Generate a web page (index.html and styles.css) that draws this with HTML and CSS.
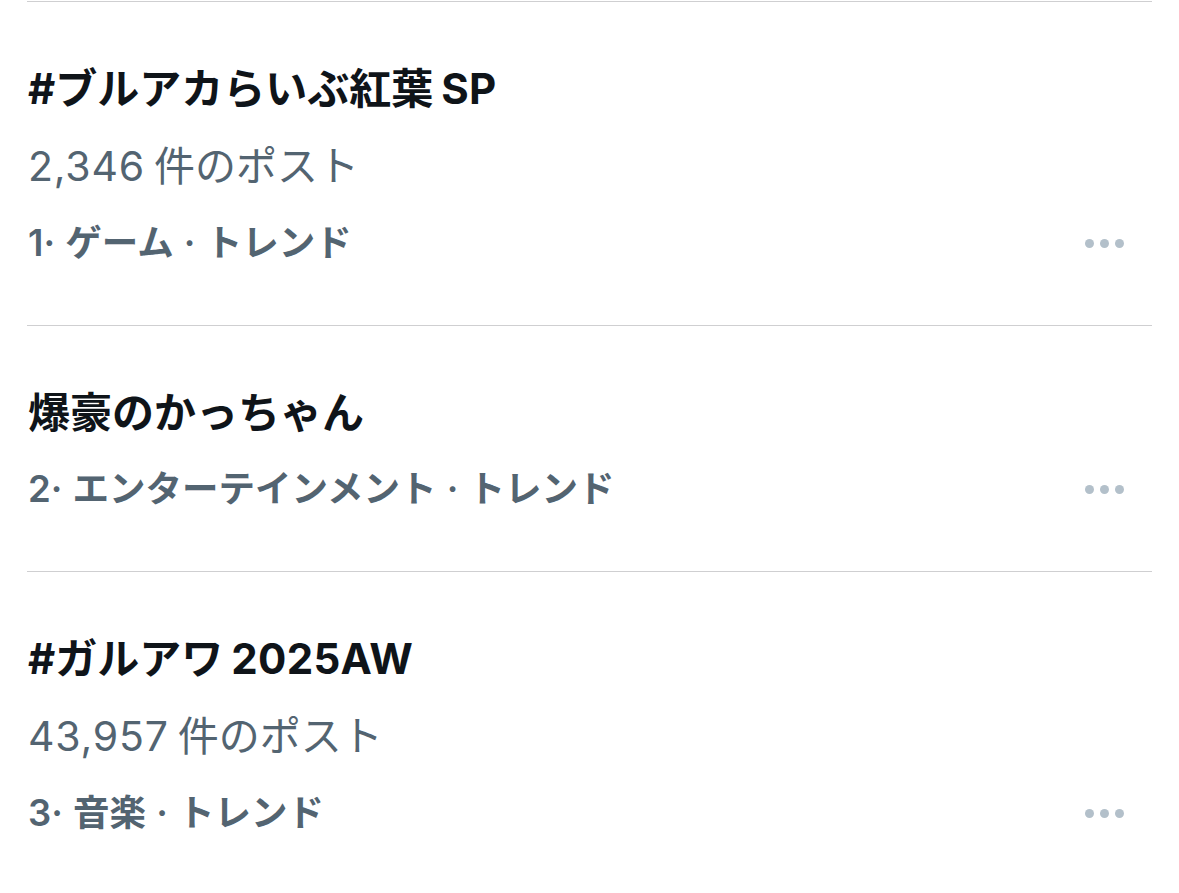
FILE: index.html
```html
<!DOCTYPE html>
<html lang="ja">
<head>
<meta charset="utf-8">
<title>トレンド</title>
<link rel="stylesheet" href="styles.css">
</head>
<body>
<div class="list">
  <div class="trend">
    <div class="info">
      <div class="title">#ブルアカらいぶ紅葉<span class="latin">SP</span></div>
      <div class="count"><span class="num">2,346</span>件のポスト</div>
      <div class="meta">1· ゲーム · トレンド</div>
    </div>
    <div class="more"><span></span><span></span><span></span></div>
  </div>
  <div class="trend">
    <div class="info">
      <div class="title">爆豪のかっちゃん</div>
      <div class="meta">2· エンターテインメント · トレンド</div>
    </div>
    <div class="more"><span></span><span></span><span></span></div>
  </div>
  <div class="trend">
    <div class="info">
      <div class="title">#ガルアワ<span class="latin">2025AW</span></div>
      <div class="count"><span class="num">43,957</span>件のポスト</div>
      <div class="meta">3· 音楽 · トレンド</div>
    </div>
    <div class="more"><span></span><span></span><span></span></div>
  </div>
</div>
</body>
</html>
```

FILE: styles.css
```css
html, body {
  margin: 0;
  padding: 0;
  background: #ffffff;
}

body {
  font-family: "Inter", "Noto Sans CJK JP", sans-serif;
  overflow: hidden;
}

.list {
  padding: 1px 27px 0;
}

.trend {
  display: flex;
  align-items: flex-end;
  border-top: 1px solid #cfcfd1;
  padding: 49px 0 44px 1px;
}

.info {
  flex: 1;
  display: flex;
  flex-direction: column;
}

.title {
  font-size: 42px;
  font-weight: 700;
  color: #0f1419;
  line-height: 76px;
  height: 76px;
  white-space: nowrap;
}

.latin {
  margin-left: 8px;
  letter-spacing: 0.3px;
}

.count {
  font-size: 41px;
  font-weight: 400;
  color: #536471;
  line-height: 78px;
  height: 78px;
  white-space: nowrap;
}

.num {
  margin-right: 9px;
  letter-spacing: 0.8px;
}

.meta {
  font-size: 36.5px;
  font-weight: 600;
  color: #536471;
  line-height: 76px;
  height: 76px;
  white-space: nowrap;
  word-spacing: 1px;
}

.more {
  display: flex;
  gap: 6px;
  height: 76px;
  align-items: center;
  padding: 0 28px 0 0;
}

.more span {
  width: 9px;
  height: 9px;
  border-radius: 50%;
  background: #b3c0ca;
}
```
